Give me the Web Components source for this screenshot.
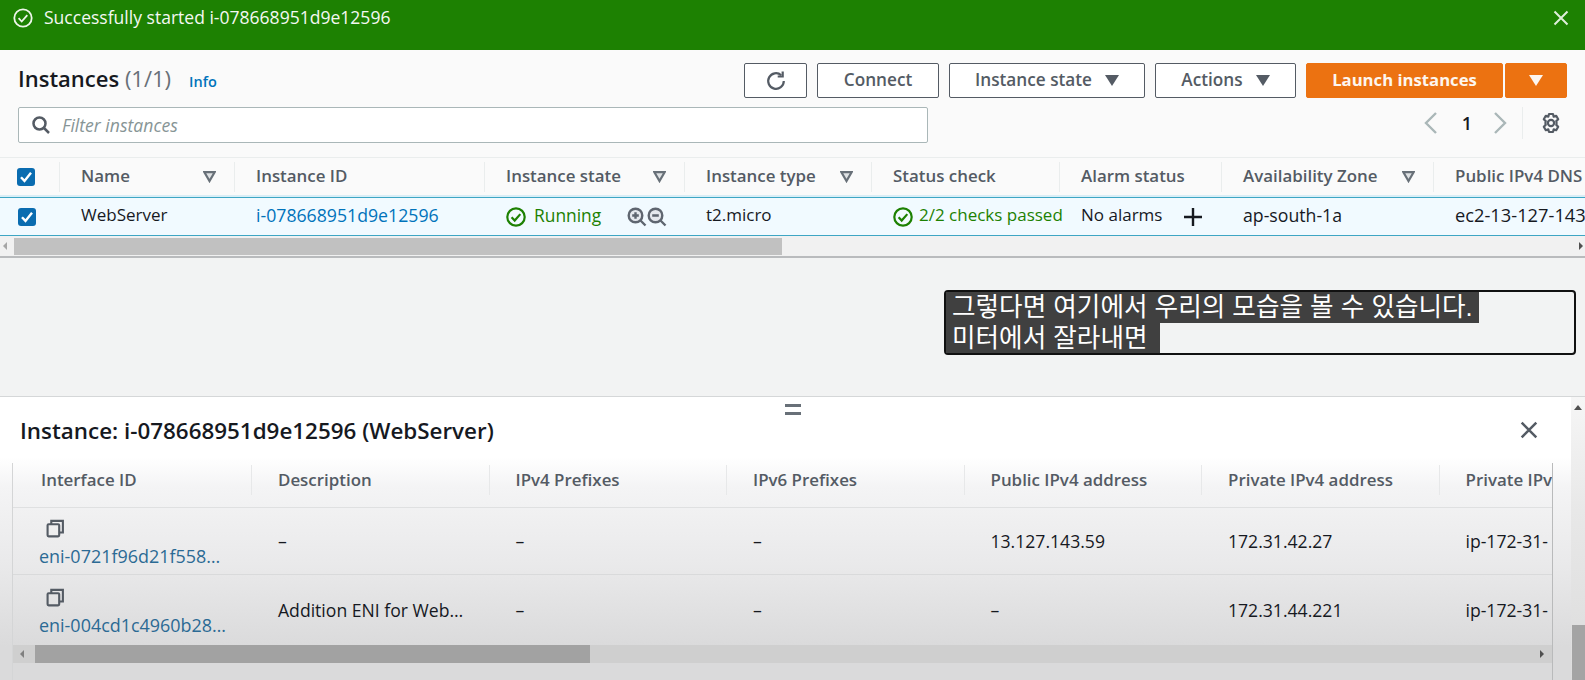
<!DOCTYPE html>
<html lang="ko"><head><meta charset="utf-8"><title>Instances</title>
<style>
html,body{margin:0;padding:0;height:680px;width:1585px;overflow:hidden;background:#f2f3f3;font-family:"Open Sans","Noto Sans CJK KR",sans-serif;color:#16191f}
body{display:flex;flex-direction:column}
</style></head><body>
<flash-bar>Successfully started i-078668951d9e12596</flash-bar>
<instances-panel></instances-panel>
<caption-band></caption-band>
<detail-panel></detail-panel>
<script>
const ICON={
 check:(c,s,w=2.2)=>`<svg width="${s}" height="${s}" viewBox="0 0 20 20" fill="none" stroke="${c}" stroke-width="${w}"><circle cx="10" cy="10" r="8.7"/><path d="M5.6 10.2l3.1 3.3 5.6-6.4"/></svg>`,
 x:(c,s,w=2)=>`<svg width="${s}" height="${s}" viewBox="0 0 16 16" fill="none" stroke="${c}" stroke-width="${w}"><path d="M1.5 1.5l13 13M14.5 1.5l-13 13"/></svg>`,
 funnel:`<svg width="13" height="12" viewBox="0 0 13 12" fill="#dfe2e4" stroke="#687078" stroke-width="2.2"><path d="M1.4 1.2h10.2L6.5 10z"/></svg>`,
 box:()=>`<svg width="18" height="18" viewBox="0 0 18 18"><rect width="18" height="18" rx="3" fill="#0a6cb0"/><path d="M4 9.2l3.5 3.7L14 4.8" fill="none" stroke="#fff" stroke-width="2.4"/></svg>`,
 copy:`<svg width="19" height="19" viewBox="0 0 18 18" fill="none" stroke="#545b64" stroke-width="2"><rect x="1.5" y="5" width="11" height="11.5" rx="1"/><path d="M5 5V1.8h11v11h-3.5"/></svg>`,
 mag:(k)=>`<svg width="20" height="20" viewBox="0 0 20 20" fill="#e6e9ee" stroke="#5f6670" stroke-width="2.4"><circle cx="8.5" cy="8.5" r="6.8"/><path d="M13.5 13.5l5 5M5.2 8.5h6.6${k=='+'?'M8.5 5.2v6.6':''}" fill="none"/></svg>`,
 gear:`<svg width="20" height="22" viewBox="0 0 20 22" fill="none" stroke="#545b64" stroke-width="2.2"><path d="M8 2h4l.7 2.6 2.5-.8 2 3.4-1.9 1.9a7 7 0 0 1 0 3.8l1.9 1.9-2 3.4-2.5-.8L12 20H8l-.7-2.6-2.5.8-2-3.4 1.9-1.9a7 7 0 0 1 0-3.8L2.8 7.2l2-3.4 2.5.8z" stroke-linejoin="round"/><circle cx="10" cy="11" r="3.1"/></svg>`
};
function def(name,html,init){customElements.define(name,class extends HTMLElement{constructor(){super();this.attachShadow({mode:'open'}).innerHTML=html;}connectedCallback(){init&&init(this.shadowRoot,this)}})}

def('flash-bar',`<style>:host{display:flex;align-items:center;height:50px;box-sizing:border-box;padding:0 16px 14px 13px;background:#1d8102;color:#f4f8f2;font-size:17.55px;gap:11px;flex:none}
span{flex:1;padding-bottom:2px}svg{display:block}</style>${ICON.check('#eef6ea',20,1.8)}<span><slot></slot></span>${ICON.x('#dfeeda',16,2)}`);

def('push-btn',`<style>:host{display:flex;align-items:center;justify-content:center;box-sizing:border-box;height:35px;border:1px solid #545b64;border-radius:2px;background:#fff;color:#545b64;font-size:17.2px;font-weight:600;gap:13px;white-space:nowrap}
:host([primary]){background:#ec7211;border-color:#ec7211;color:#fdf6ef;font-weight:700;font-size:16.7px}
:host([icononly]){gap:0}
.t{padding-bottom:2px}
.c{width:0;height:0;border:7px solid transparent;border-top:11px solid currentColor;border-bottom:0}
:host(:not([caret])) .c{display:none}</style><span class="t"><slot></slot></span><span class="c"></span>`);

def('col-head',`<style>:host{display:flex;align-items:center;box-sizing:border-box;height:30px;padding-left:21px;padding-right:18px;border-right:1px solid #eaeded;color:#545b64;font-size:16.9px;font-weight:600;white-space:nowrap}
span{flex:1;padding-bottom:3px}.f{display:block;line-height:0;padding:0}:host([nofilter]) .f{display:none}:host([last]){border:0;padding-right:0;overflow:visible}</style><span><slot></slot></span><span class="f" style="flex:none">${ICON.funnel}</span>`);

const tracks='60px 175px 250px 200px 187px 188px 162px 212px 230px';
def('instances-panel',`<style>:host{display:block;background:#fafafa;flex:none;height:208px;box-sizing:border-box;border-bottom:2px solid #b9bbbd;overflow:hidden}
.top{display:flex;align-items:flex-start;padding:13px 18px 0 18px;height:57px;box-sizing:border-box}
h1{margin:0;font-size:22px;font-weight:600;line-height:30px;white-space:nowrap;flex:1}h1 em{font-style:normal;font-weight:400;color:#687078}h1 a{font-size:14.5px;color:#0073bb;margin-left:18px;font-weight:600}
.btns{display:flex;gap:10px}
.btns .g{display:flex;gap:2px}
.search{display:flex;padding:0 18px;height:50px;box-sizing:border-box;align-items:flex-start}
.in{width:910px;height:36px;box-sizing:border-box;border:1px solid #aab7b8;border-radius:2px;background:#fff;display:flex;align-items:center;gap:12px;padding-left:13px;color:#879596;font-style:italic;font-size:17.6px}
.pg{margin-left:auto;display:flex;align-items:center;height:32px;color:#16191f;font-weight:600;font-size:18px}
.table{height:99px;box-sizing:border-box;border-top:1px solid #eaeded;overflow:hidden}
.h,.r{display:grid;grid-template-columns:${tracks};white-space:nowrap}
.h{height:37px;align-items:center;background:#fafafa;border-bottom:2px solid #d9eef6}
.r{height:39px;align-items:center;background:#f1faff;border-top:1px solid #3ea6c4;border-bottom:1px solid #3ea6c4;box-sizing:border-box;font-size:17px;color:#16191f}
.cb{display:flex;align-items:center;padding-left:17px}
.r .cb{padding-left:18px}
.cb i{display:block;width:1px;height:30px;background:#eaeded;margin-left:24px}
.c{padding-left:21px;display:flex;align-items:center;overflow:hidden;line-height:34px}
.c>*{flex:none}
.tx{padding-bottom:3px}
.n{font-size:17.7px}.l{font-size:18.3px}
.sb{height:20px;display:flex;align-items:flex-end;background:#f1f1f1;box-sizing:border-box}
.ar{border:4px solid transparent;width:0;height:0;align-self:center}
.th{margin-left:7px;width:768px;height:17px;background:#c1c1c1;margin-bottom:1px}
a{color:#0073bb;text-decoration:none}
</style>
<div class="top"><h1>Instances <em>(1/1)</em><a>Info</a></h1>
<div class="btns"><push-btn style="width:63px"><svg style="display:block;margin-top:2px" width="22" height="22" viewBox="0 0 22 22" fill="none" stroke="#545b64" stroke-width="2.2"><path d="M18.8 11a7.8 7.8 0 1 1-2.6-5.8"/><path d="M17.7 1.5v5h-5" /></svg></push-btn>
<push-btn style="width:122px">Connect</push-btn><push-btn caret style="width:196px">Instance state</push-btn><push-btn caret style="width:141px">Actions</push-btn>
<div class="g"><push-btn primary style="width:197px">Launch instances</push-btn><push-btn primary caret icononly style="width:62px"></push-btn></div></div></div>
<div class="search"><div class="in"><svg width="18" height="18" viewBox="0 0 18 18" fill="none" stroke="#545b64" stroke-width="2.5"><circle cx="7.5" cy="7.5" r="6"/><path d="M12 12l5 5"/></svg>Filter instances</div>
<div class="pg"><svg width="14" height="22" viewBox="0 0 14 22" fill="none" stroke="#aab7b8" stroke-width="2.4"><path d="M12 1L2 11l10 10"/></svg><span style="margin:0 21px 0 24px">1</span><svg width="14" height="22" viewBox="0 0 14 22" fill="none" stroke="#aab7b8" stroke-width="2.4"><path d="M2 1l10 10L2 21"/></svg><i style="display:block;width:1px;height:32px;background:#eaeded;margin:0 18px 0 15px"></i>${ICON.gear}<i style="width:6px"></i></div></div>
<div class="table">
<div class="h"><div class="cb">${ICON.box()}<i></i></div></div>
<div class="r"></div>
<div class="sb"><span class="ar" style="border-right-color:#a6a6a6;margin-left:-1px"></span><div class="th"></div><span style="flex:1"></span><span class="ar" style="border-left-color:#505050;margin-right:-2px"></span></div>
</div>`,(s)=>{
 const h=s.querySelector('.h');
 [['Name',1],['Instance ID',0],['Instance state',1],['Instance type',1],['Status check',0],['Alarm status',0],['Availability Zone',1],['Public IPv4 DNS',2]].forEach(([t,f])=>{
  const e=document.createElement('col-head');e.textContent=t;if(!f)e.setAttribute('nofilter','');if(f==2){e.setAttribute('nofilter','');e.setAttribute('last','')}h.appendChild(e)});
 const r=s.querySelector('.r');
 const t=(x,c='')=>`<span class="tx ${c}">${x}</span>`;
 r.innerHTML=`<div class="cb">${ICON.box()}</div><div class="c">${t('WebServer')}</div><div class="c n">${t('<a>i-078668951d9e12596</a>')}</div>
 <div class="c" style="color:#1d8102;gap:8px">${ICON.check('#1d8102',20)}<span class="tx" style="font-size:17.4px">Running</span><span style="margin-left:18px;display:flex">${ICON.mag('+')}${ICON.mag('-')}</span></div>
 <div class="c">${t('t2.micro')}</div><div class="c" style="color:#1d8102;gap:6px;overflow:visible">${ICON.check('#1d8102',20)}<span class="tx" style="margin-right:-20px">2/2 checks passed</span></div>
 <div class="c">${t('No alarms')}<svg style="margin-left:21px" width="20" height="20" viewBox="0 0 20 20" stroke="#16191f" stroke-width="2.4"><path d="M10 1v18M1 10h18"/></svg></div><div class="c n">${t('ap-south-1a')}</div><div class="c l" style="overflow:visible">${t('ec2-13-127-143')}</div>`;
});

def('caption-band',`<style>:host{display:flex;justify-content:flex-end;align-items:flex-start;flex:none;height:139px;box-sizing:border-box;padding:32px 9px 0 0;background:#f2f3f3;border-bottom:1px solid #d5d7d8}
.b{box-sizing:border-box;width:632px;height:65px;border:2px solid #111;border-radius:4px;font-size:25.6px;line-height:30.5px;color:#fff;font-family:"Liberation Sans","Noto Sans CJK KR",sans-serif}
.l{display:table;background:#404040;padding:0 6px;height:30.5px;white-space:nowrap}
.l2{padding-right:13px}</style><div class="b"><div class="l">그렇다면 여기에서 우리의 모습을 볼 수 있습니다.</div><div class="l l2">미터에서 잘라내면</div></div>`);

def('detail-panel',`<style>:host{display:block;position:relative;flex:1;min-height:0;background:linear-gradient(#fff 0,#fff 60px,#f4f4f5 90px,#e9e9ea 170px,#dadadb 250px);overflow:hidden}
.hand{position:absolute;left:785px;top:7px;width:16px;height:5px;border-top:3px solid #687078;border-bottom:3px solid #687078}
.tt{display:flex;align-items:center;height:66px;padding:0 47px 0 20px;box-sizing:border-box;font-size:22.4px;font-weight:600}.tt span{flex:1}
.w{margin-left:12px;width:1539px;border-left:1px solid #d4d5d6;border-right:1px solid #b9babb;height:217px;overflow:hidden}
.g{display:grid;grid-template-columns:239px repeat(6,237.5px);white-space:nowrap}
.hd{height:42px;padding-top:2px;align-items:flex-start;border-bottom:1px solid #dfe0e1;font-size:16.9px;font-weight:600;color:#545b64}
.hd div{height:30px;display:flex;align-items:center;padding-left:26px;border-right:1px solid #e7e8e9}
.hd div span{padding-bottom:2px}
.hd div:first-child{padding-left:28px}
.rw{height:66px;align-items:center;font-size:17.6px;border-bottom:1px solid #d9dadb;color:#16191f}
.rw.b2{height:69px;border:0}
.rw>div{padding-left:26px}.rw>.f{padding-left:26px;padding-top:5px;display:flex;flex-direction:column;gap:6px;font-size:17.95px}
.rw a{color:#2b6a94}
.rw .ci{padding-left:7px;line-height:0}
.sb{display:flex;align-items:center;height:18px;margin-top:1px;background:#cfcfcf}
.th{width:555px;height:18px;background:#a2a2a2;margin-left:11px}
.ar{border:4px solid transparent;width:0;height:0}
.v{position:absolute;right:0;top:0;bottom:0;width:14px;background:linear-gradient(#f6f6f6,#e8e8e8 40%,#dcdcdc)}
.v b{position:absolute;left:3px;top:8px;border:4px solid transparent;border-bottom:5px solid #505050;border-top:0}
.v i{position:absolute;left:1px;right:0;top:228px;bottom:0;background:#a4a4a4}
</style>
<div class="hand"></div>
<div class="tt"><span>Instance: i-078668951d9e12596 (WebServer)</span>${ICON.x('#545b64',18,2.2)}</div>
<div class="w"><div class="g hd"><div><span>Interface ID</span></div><div><span>Description</span></div><div><span>IPv4 Prefixes</span></div><div><span>IPv6 Prefixes</span></div><div><span>Public IPv4 address</span></div><div><span>Private IPv4 address</span></div><div style="border:0"><span>Private IPv</span></div></div>
<div class="g rw"><div class="f"><span class="ci">${ICON.copy}</span><a>eni-0721f96d21f558…</a></div><div>–</div><div>–</div><div>–</div><div>13.127.143.59</div><div>172.31.42.27</div><div>ip-172-31-</div></div>
<div class="g rw b2"><div class="f"><span class="ci">${ICON.copy}</span><a>eni-004cd1c4960b28…</a></div><div>Addition ENI for Web…</div><div>–</div><div>–</div><div>–</div><div>172.31.44.221</div><div>ip-172-31-</div></div>
<div class="sb"><span class="ar" style="border-right-color:#808080;margin-left:3px"></span><div class="th"></div><span style="flex:1"></span><span class="ar" style="border-left-color:#505050;margin-right:4px"></span></div></div>
<div class="v"><b></b><i></i></div>`);
</script></body></html>
